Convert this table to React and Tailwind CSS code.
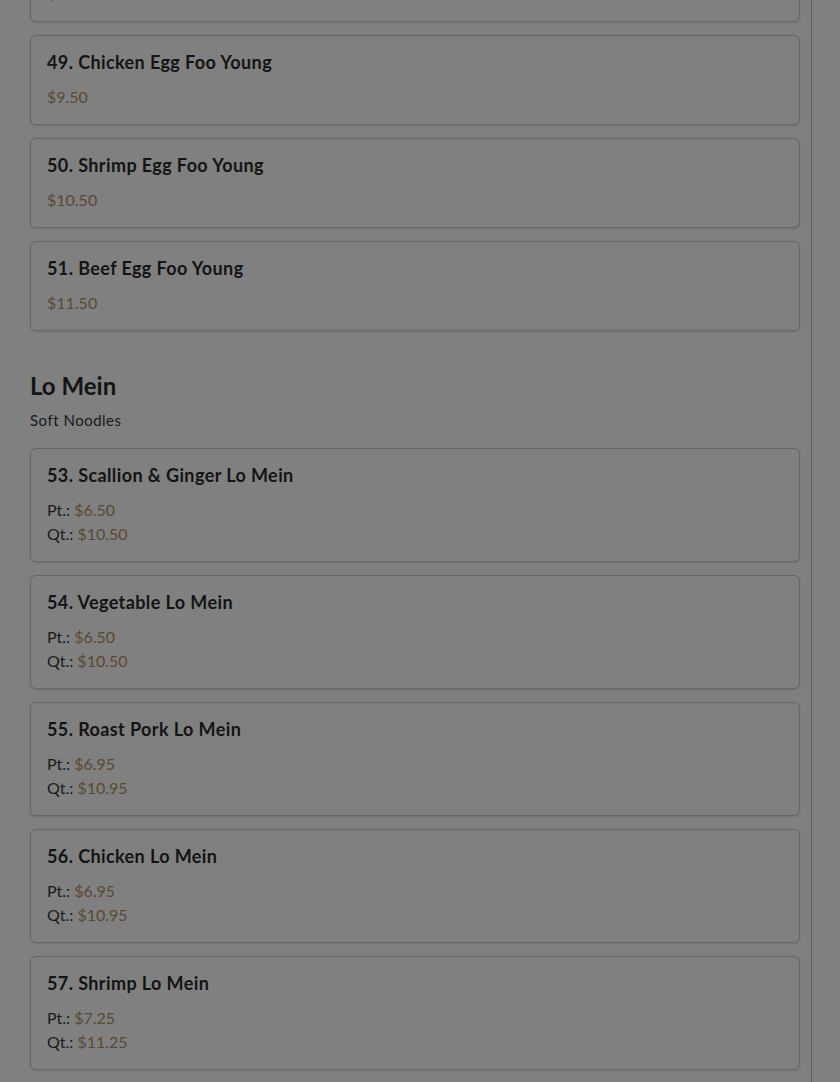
const eggFooYoung = [
  { name: "48. Roast Pork Egg Foo Young", price: "$9.50" },
  { name: "49. Chicken Egg Foo Young", price: "$9.50" },
  { name: "50. Shrimp Egg Foo Young", price: "$10.50" },
  { name: "51. Beef Egg Foo Young", price: "$11.50" },
];

const loMein = [
  { name: "53. Scallion & Ginger Lo Mein", pt: "$6.50", qt: "$10.50" },
  { name: "54. Vegetable Lo Mein", pt: "$6.50", qt: "$10.50" },
  { name: "55. Roast Pork Lo Mein", pt: "$6.95", qt: "$10.95" },
  { name: "56. Chicken Lo Mein", pt: "$6.95", qt: "$10.95" },
  { name: "57. Shrimp Lo Mein", pt: "$7.25", qt: "$11.25" },
];

function Card({ item }) {
  return (
    <div className="rounded-[6px] border border-[#676767] bg-[#808080] px-4 pt-[15px] pb-[15px] shadow-[0_1px_2px_rgba(0,0,0,0.12)]">
      <h3 className="text-[18px] font-bold leading-[22px] tracking-[0.4px] text-[#141414]">{item.name}</h3>
      <div className="mt-[12px] text-[16px] leading-6">
        {item.price && <p className="text-[#5a4932]">{item.price}</p>}
        {item.pt && (
          <>
            <p className="text-[#1a1a1a]">
              Pt.: <span className="text-[#5a4932]">{item.pt}</span>
            </p>
            <p className="text-[#1a1a1a]">
              Qt.: <span className="text-[#5a4932]">{item.qt}</span>
            </p>
          </>
        )}
      </div>
    </div>
  );
}

export default function App() {
  return (
    <div
      className="h-[1082px] overflow-hidden bg-[#808080]"
      style={{ fontFamily: "Lato, 'Noto Sans', sans-serif" }}
    >
      <div className="w-[812px] h-full overflow-hidden border-r border-[#5e5e5e]">
        <div className="pl-[30px] pr-[11px]">
          <div className="mt-[-68px] flex flex-col gap-[13px]">
            {eggFooYoung.map((item) => (
              <Card key={item.name} item={item} />
            ))}
          </div>

          <h2 className="mt-[39px] text-[24px] font-bold leading-8 text-[#141414]">Lo Mein</h2>
          <p className="mt-[6px] text-[15px] leading-6 tracking-[0.5px] text-[#1a1a1a]">Soft Noodles</p>

          <div className="mt-[16px] flex flex-col gap-[13px]">
            {loMein.map((item) => (
              <Card key={item.name} item={item} />
            ))}
          </div>
        </div>
      </div>
    </div>
  );
}
